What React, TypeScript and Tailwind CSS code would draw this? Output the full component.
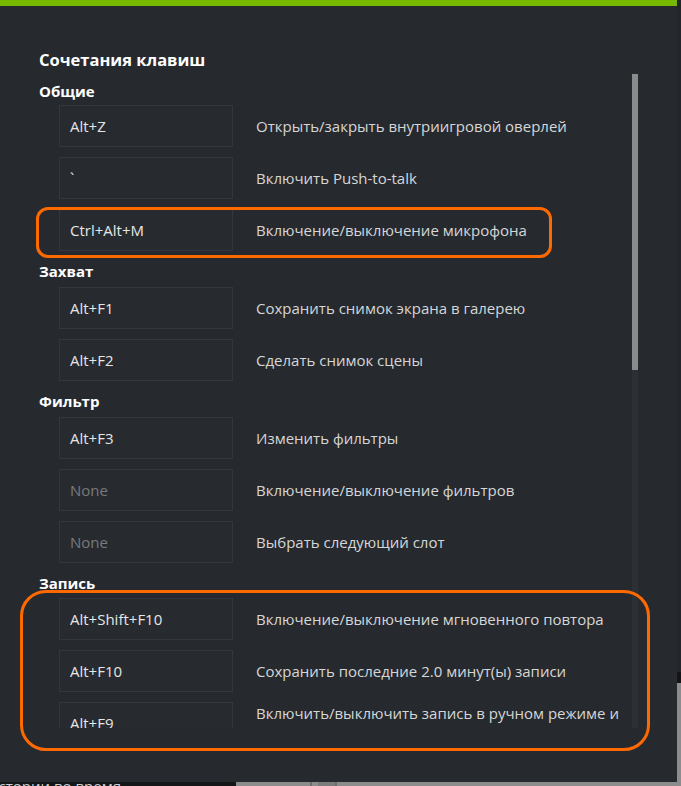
import React from 'react';

type Shortcut = { keys: string; label: string; empty?: boolean };
type Section = { title: string; items: Shortcut[] };

const sections: Section[] = [
  {
    title: 'Общие',
    items: [
      { keys: 'Alt+Z', label: 'Открыть/закрыть внутриигровой оверлей' },
      { keys: '`', label: 'Включить Push-to-talk' },
      { keys: 'Ctrl+Alt+M', label: 'Включение/выключение микрофона' },
    ],
  },
  {
    title: 'Захват',
    items: [
      { keys: 'Alt+F1', label: 'Сохранить снимок экрана в галерею' },
      { keys: 'Alt+F2', label: 'Сделать снимок сцены' },
    ],
  },
  {
    title: 'Фильтр',
    items: [
      { keys: 'Alt+F3', label: 'Изменить фильтры' },
      { keys: 'None', label: 'Включение/выключение фильтров', empty: true },
      { keys: 'None', label: 'Выбрать следующий слот', empty: true },
    ],
  },
  {
    title: 'Запись',
    items: [
      { keys: 'Alt+Shift+F10', label: 'Включение/выключение мгновенного повтора' },
      { keys: 'Alt+F10', label: 'Сохранить последние 2.0 минут(ы) записи' },
      { keys: 'Alt+F9', label: 'Включить/выключить запись в ручном режиме и\nсохранить запись' },
    ],
  },
];

function Row({ item }: { item: Shortcut }) {
  return (
    <div className="flex items-center pl-5">
      <div className="flex h-[42px] w-[174px] shrink-0 items-center border border-[#33373c] bg-[#272b30] px-[10px]">
        <span className={item.empty ? 'text-[#77797c]' : 'text-[#e6e6e6]'}>{item.keys}</span>
      </div>
      <div className="ml-[23px] w-[372px] whitespace-pre-line text-[#d6d6d6]">{item.label}</div>
    </div>
  );
}

export default function App() {
  return (
    <div
      className="relative h-[786px] w-[681px] overflow-hidden bg-[#8c8c8c] text-[15px] leading-5"
      style={{ fontFamily: '"Open Sans", "Noto Sans", sans-serif' }}
    >
      <div className="flex h-[782px]">
        {/* main panel */}
        <div className="flex h-full w-[677px] flex-col border-t-[6px] border-[#76b900] bg-[#262a2f]">
          <h1 className="mt-[44px] pl-[39px] text-[16.5px] font-bold text-white">Сочетания клавиш</h1>
          <div className="mt-[4px] flex h-[654px]">
            <div className="h-full flex-1 overflow-hidden pl-[39px]">
              {sections.map((s, i) => (
                <div key={s.title}>
                  <div
                    className={
                      i === 0
                        ? 'mt-[7px] mb-[4px] font-bold text-white'
                        : i === 3
                          ? 'mt-[10px] mb-[5px] font-bold text-white'
                          : 'mt-[10px] mb-[6px] font-bold text-white'
                    }
                  >
                    {s.title}
                  </div>
                  <div className="flex flex-col gap-[10px]">
                    {s.items.map((it) => (
                      <Row key={it.label} item={it} />
                    ))}
                  </div>
                </div>
              ))}
            </div>
            <div className="mr-[39px] h-full w-[6px] bg-[#2c3035]">
              <div className="h-[296px] w-full bg-[#8a8b8d]" />
            </div>
          </div>
        </div>
        {/* window behind, right edge */}
        <div className="flex w-[4px] flex-col">
          <div className="h-[672px] bg-[#23272b]" />
          <div className="h-[11px] bg-[#121416]" />
          <div className="flex-1 bg-[#8c8c8c]" />
        </div>
      </div>

      {/* window behind, bottom edge */}
      <div className="flex h-[4px]">
        <div className="w-[236px] overflow-hidden bg-[#141618]">
          <div className="-mt-[6px] -ml-[11px] whitespace-nowrap text-[15px] leading-5 text-[#cfcfcf]">
            истории во время
          </div>
        </div>
        <div className="w-[74px] bg-[#8c8c8c]" />
        <div className="w-[2px] bg-[#6e6e6e]" />
        <div className="w-[6px] bg-[#8c8c8c]" />
        <div className="w-[17px] bg-[#7c7c7c]" />
        <div className="w-[2px] bg-[#6e6e6e]" />
        <div className="flex-1 bg-[#8c8c8c]" />
      </div>

      {/* highlight annotations */}
      <div className="pointer-events-none absolute left-[36px] top-[207px] h-[51px] w-[516px] rounded-[12px] border-[3px] border-[#ff6a00]" />
      <div className="pointer-events-none absolute left-[20px] top-[590px] h-[161px] w-[630px] rounded-[26px] border-[3px] border-[#ff6a00]" />
    </div>
  );
}
